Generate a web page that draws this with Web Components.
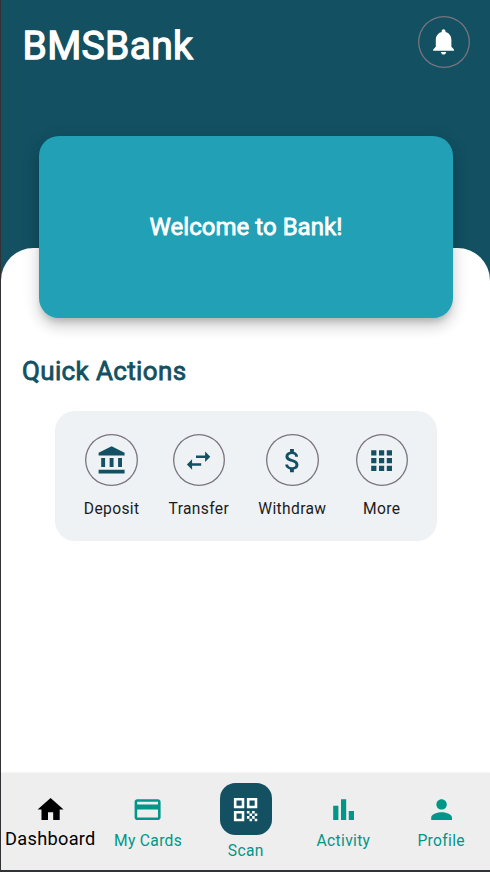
<!DOCTYPE html>
<html lang="en">
<head>
<meta charset="utf-8">
<title>BMSBank</title>
<style>
html,body{margin:0;height:100%;overflow:hidden}
body{font-family:Roboto,"Liberation Sans",sans-serif;background:#303236}
</style>
</head>
<body>
<bank-app></bank-app>
<script>
const ICONS = {
  bell: 'M12 22c1.1 0 2-.9 2-2h-4c0 1.1.89 2 2 2zm6-6v-5c0-3.07-1.64-5.64-4.5-6.32V4c0-.83-.67-1.5-1.5-1.5s-1.5.67-1.5 1.5v.68C7.63 5.36 6 7.92 6 11v5l-2 2v1h16v-1l-2-2z',
  bank: 'M4 10h3v7H4zM10.5 10h3v7h-3zM2 19h20v3H2zM17 10h3v7h-3zM12 1 2 6v2h20V6z',
  swap: 'M6.99 11 3 15l3.99 4v-3H14v-2H6.99v-3zM21 9l-3.99-4v3H10v2h7.01v3L21 9z',
  dollar: 'M11.8 10.9c-2.27-.59-3-1.2-3-2.15 0-1.09 1.01-1.85 2.7-1.85 1.78 0 2.44.85 2.5 2.1h2.21c-.07-1.72-1.12-3.3-3.21-3.81V3h-3v2.16c-1.94.42-3.5 1.68-3.5 3.61 0 2.31 1.91 3.46 4.7 4.13 2.5.6 3 1.48 3 2.41 0 .69-.49 1.79-2.7 1.79-2.06 0-2.87-.92-2.98-2.1h-2.2c.12 2.19 1.76 3.42 3.68 3.83V21h3v-2.15c1.95-.37 3.5-1.5 3.5-3.55 0-2.84-2.43-3.81-4.7-4.4z',
  apps: 'M4 8h4V4H4v4zm6 12h4v-4h-4v4zm-6 0h4v-4H4v4zm0-6h4v-4H4v4zm6 0h4v-4h-4v4zm6-10v4h4V4h-4zm-6 4h4V4h-4v4zm6 6h4v-4h-4v4zm0 6h4v-4h-4v4z',
  home: 'M10 20v-6h4v6h5v-8h3L12 3 2 12h3v8z',
  card: 'M20 4H4c-1.11 0-1.99.89-1.99 2L2 18c0 1.11.89 2 2 2h16c1.11 0 2-.89 2-2V6c0-1.11-.89-2-2-2zm0 14H4v-6h16v6zm0-10H4V6h16v2z',
  qr: 'M3 11h8V3H3v8zm2-6h4v4H5V5zM3 21h8v-8H3v8zm2-6h4v4H5v-4zM13 3v8h8V3h-8zm6 6h-4V5h4v4zM19 19h2v2h-2zM13 13h2v2h-2zM15 15h2v2h-2zM13 17h2v2h-2zM15 19h2v2h-2zM17 17h2v2h-2zM17 13h2v2h-2zM19 15h2v2h-2z',
  chart: 'M4 9h4v11H4zM16 13h4v7h-4zM10 4h4v16h-4z',
  person: 'M12 12c2.21 0 4-1.79 4-4s-1.79-4-4-4-4 1.79-4 4 1.79 4 4 4zm0 2c-2.67 0-8 1.34-8 4v2h16v-2c0-2.66-5.33-4-8-4z'
};

function define(name, render) {
  customElements.define(name, class extends HTMLElement {
    constructor() {
      super();
      this.attachShadow({ mode: 'open' });
    }
    connectedCallback() {
      this.shadowRoot.innerHTML = render(this);
    }
  });
}

define('bank-icon', el => `
<style>:host{display:block;width:31.2px;height:31.2px}svg{display:block;width:100%;height:100%;fill:currentColor}</style>
<svg viewBox="0 0 24 24"><path fill-rule="evenodd" d="${ICONS[el.getAttribute('name')]}"/></svg>`);

define('round-button', el => `
<style>
:host{display:grid;place-items:center;box-sizing:border-box;width:52.4px;height:52.4px;color:#125062;border-radius:50%;box-shadow:inset 0 0 0 1.3px #79747e}
</style>
<bank-icon name="${el.getAttribute('icon')}"></bank-icon>`);

define('quick-action', el => `
<style>
:host{display:flex;flex-direction:column;align-items:center;color:#1d1b20;font-size:15.6px;line-height:20px;letter-spacing:.36px}
.label{margin-top:12.6px;white-space:nowrap}
</style>
<round-button icon="${el.getAttribute('icon')}"></round-button>
<div class="label"><slot></slot></div>`);

define('nav-item', el => `
<style>
:host{flex:1 1 0;min-width:0;display:flex;flex-direction:column;align-items:center;color:#009688;font-size:15.6px;line-height:20px;letter-spacing:.34px;padding-top:21px}
:host([active]){color:#000;font-size:18.2px;letter-spacing:.3px}
:host([raised]){padding-top:10.4px}
:host([raised]) .tile{width:52px;height:52px;border-radius:15.6px;background:#125062;color:#fff}
.tile{display:grid;place-items:center}
.label{white-space:nowrap;margin-top:6px}
:host([active]) .label{margin-top:4px}
:host([raised]) .label{margin-top:5.6px}
</style>
<div class="tile"><bank-icon name="${el.getAttribute('icon')}"></bank-icon></div>
<div class="label"><slot></slot></div>`);

define('welcome-card', () => `
<style>
:host{display:grid;place-items:center;box-sizing:border-box;width:413.6px;height:182px;border-radius:20px;background:#21a0b6;color:#fff;font-size:24px;line-height:30px;
box-shadow:0 6px 6px -3px rgba(0,0,0,.18),0 9px 13px 1px rgba(0,0,0,.12),0 3px 18px 3px rgba(0,0,0,.06)}
span{-webkit-text-stroke:.8px currentColor;letter-spacing:.03px}
</style>
<span><slot></slot></span>`);

define('bank-app', () => `
<style>
:host{display:grid;box-sizing:border-box;width:490px;height:872px;padding:0 0 2px 1px;grid-template-rows:248px 1fr 97px;background:#303236}
header{background:#125062;display:flex;flex-direction:column;align-items:center;height:290px}
.bar{flex:none;align-self:stretch;display:flex;justify-content:space-between;padding:15.5px 20px 0 21.5px;height:120px;box-sizing:border-box}
.bar round-button{color:#fff}
h1,h2{margin:0;font-weight:400}
h1{color:#fff;font-size:39px;line-height:46px;padding-top:7px;letter-spacing:.34px;-webkit-text-stroke:1.3px currentColor}
main{background:#fff;border-radius:32.5px 32.5px 0 0;position:relative;z-index:0}
welcome-card{flex:none;margin:16px 0 0 1px;position:relative;z-index:1}
h2{font-size:26px;line-height:32px;color:#125062;padding:107px 0 0 21px;letter-spacing:.36px;-webkit-text-stroke:.8px currentColor}
.actions{display:flex;justify-content:space-between;box-sizing:border-box;width:382px;height:130px;margin:24px 0 0 54px;padding:23px 29px 0 28.8px;background:#eef2f5;border-radius:20px}
nav{display:flex;background:#eee;box-shadow:0 -1px 2px rgba(0,0,0,.05);z-index:1;padding-left:.5px}
</style>
<header>
  <div class="bar"><h1>BMSBank</h1><round-button icon="bell"></round-button></div>
  <welcome-card>Welcome to Bank!</welcome-card>
</header>
<main>
  <h2>Quick Actions</h2>
  <section class="actions">
    <quick-action icon="bank">Deposit</quick-action>
    <quick-action icon="swap">Transfer</quick-action>
    <quick-action icon="dollar">Withdraw</quick-action>
    <quick-action icon="apps">More</quick-action>
  </section>
</main>
<nav>
  <nav-item icon="home" active>Dashboard</nav-item>
  <nav-item icon="card">My Cards</nav-item>
  <nav-item icon="qr" raised>Scan</nav-item>
  <nav-item icon="chart">Activity</nav-item>
  <nav-item icon="person">Profile</nav-item>
</nav>`);
</script>
</body>
</html>
